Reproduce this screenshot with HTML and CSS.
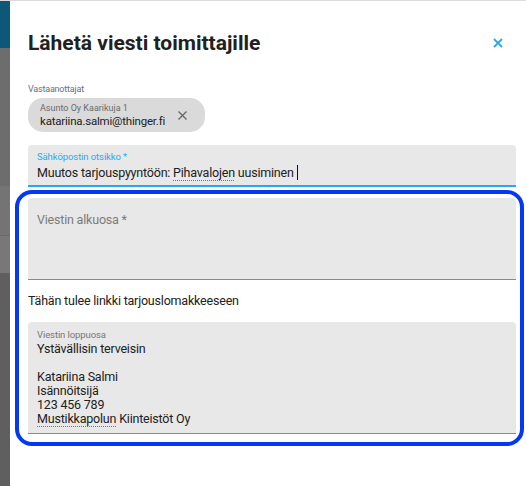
FILE: index.html
```html
<!DOCTYPE html>
<html lang="fi">
<head>
<meta charset="utf-8">
<title>Lähetä viesti toimittajille</title>
<link rel="stylesheet" href="styles.css">
</head>
<body>
<div class="page">
  <div class="backdrop">
    <div class="bd-head"></div>
    <div class="bd-a"></div>
    <div class="bd-b"></div>
    <div class="bd-c"></div>
    <div class="bd-d"></div>
  </div>
  <div class="dialog">
    <div class="dialog-head">
      <h1 class="title">Lähetä viesti toimittajille</h1>
      <button class="close" aria-label="Sulje">
        <svg width="10" height="10" viewBox="0 0 10 10"><path d="M1 1L9 9M9 1L1 9" stroke="#29a8f2" stroke-width="1.8" fill="none"/></svg>
      </button>
    </div>

    <div class="recipients">
      <div class="small-label">Vastaanottajat</div>
      <div class="chip">
        <div class="chip-text">
          <div class="chip-sub">Asunto Oy Kaarikuja 1</div>
          <div class="chip-main">katariina.salmi@thinger.fi</div>
        </div>
        <svg class="chip-x" width="9" height="9" viewBox="0 0 9 9"><path d="M0.5 0.5L8.5 8.5M8.5 0.5L0.5 8.5" stroke="#666" stroke-width="1.3" fill="none"/></svg>
      </div>
    </div>

    <div class="field field-focus subject">
      <div class="field-label focus-label">Sähköpostin otsikko *</div>
      <div class="field-value">Muutos tarjouspyyntöön: <span class="spell">Pihavalojen</span> uusiminen<span class="cursor"></span></div>
    </div>

    <div class="highlight">
      <div class="field intro">
        <div class="placeholder">Viestin alkuosa *</div>
      </div>
      <div class="link-note">Tähän tulee linkki tarjouslomakkeeseen</div>
      <div class="field outro">
        <div class="field-label">Viestin loppuosa</div>
        <div class="field-value multi">Ystävällisin terveisin<br><br>Katariina Salmi<br>Isännöitsijä<br>123 456 789<br><span class="spell">Mustikkapolun</span> Kiinteistöt Oy</div>
      </div>
    </div>
  </div>
</div>
</body>
</html>
```

FILE: styles.css
```css
* { box-sizing: border-box; }
html, body { margin: 0; padding: 0; background: #fff; }
body {
  font-family: Roboto, "Liberation Sans", Arial, sans-serif;
  color: #212121;
  overflow: hidden;
}
.page {
  display: flex;
  width: 526px;
  height: 486px;
  border-top: 1px solid #dcdcdf;
  overflow: hidden;
}
.backdrop {
  width: 10px;
  flex: none;
  display: flex;
  flex-direction: column;
  background: #5c5c5c;
}
.bd-head { height: 47px; background: #0d5878; }
.bd-a { height: 138px; background: #6d6d6d; }
.bd-b { height: 50px; background: #747474; border-bottom: 1px solid #6a6a6a; }
.bd-c { height: 37px; background: #787878; }
.bd-d { flex: 1; background: #5f5f5f; }

.dialog {
  flex: none;
  width: 516px;
  background: #fff;
  padding: 30px 0 0 18px;
}
.dialog-head {
  display: flex;
  align-items: center;
  justify-content: space-between;
  width: 488px;
  height: 24px;
}
.title {
  margin: 0;
  font-size: 21px;
  line-height: 24px;
  font-weight: 700;
  color: #212121;
}
.close {
  border: 0;
  background: none;
  padding: 0;
  margin-right: 13px;
  width: 10px;
  height: 10px;
  display: block;
}
.close svg { display: block; }

.recipients { margin-top: 28px; }
.small-label {
  font-size: 9px;
  line-height: 12px;
  color: #6f6f6f;
  letter-spacing: -0.2px;
}
.chip {
  margin-top: 3px;
  width: 177px;
  height: 34px;
  border-radius: 15px;
  background: #dadada;
  display: flex;
  align-items: center;
  justify-content: space-between;
  padding: 0 18px 0 12px;
}
.chip-sub {
  font-size: 9px;
  line-height: 11px;
  color: #6a6a6a;
  margin-top: 1px;
}
.chip-main {
  font-size: 11.5px;
  line-height: 15px;
  letter-spacing: -0.2px;
  color: #212121;
}
.chip-x { display: block; margin-top: 1px; }

.field {
  width: 488px;
  background: #e8e8e8;
  border-radius: 4px 4px 0 0;
  border-bottom: 1px solid #8a8a8a;
  padding: 0 9px;
}
.field-focus { border-bottom: 2px solid #29a8f2; }
.subject {
  margin-top: 13px;
  height: 42px;
  padding-top: 6px;
}
.field-label {
  font-size: 9.5px;
  line-height: 12px;
  letter-spacing: -0.1px;
  color: #777;
}
.focus-label { color: #29a8f2; }
.field-value {
  font-size: 12.5px;
  line-height: 16px;
  letter-spacing: -0.2px;
  color: #212121;
  margin-top: 2px;
}
.spell {
  background-image: repeating-linear-gradient(to right, #e8473f 0 1px, transparent 1px 2px);
  background-size: 100% 1px;
  background-position: 0 100%;
  background-repeat: no-repeat;
  padding-bottom: 1px;
}
.cursor {
  display: inline-block;
  width: 1px;
  height: 15px;
  background: #111;
  margin-left: 3px;
  vertical-align: -3px;
}

.highlight {
  margin: 3px 0 0 -13px;
  width: 509px;
  border: 4px solid #0438f5;
  border-radius: 17px;
  padding: 4px 0 8px 9px;
}
.intro {
  height: 82px;
  padding-top: 14px;
}
.placeholder {
  font-size: 12.5px;
  line-height: 16px;
  letter-spacing: -0.2px;
  color: #7b7b7b;
}
.link-note {
  font-size: 12.5px;
  line-height: 16px;
  letter-spacing: -0.2px;
  color: #212121;
  margin: 13px 0 0 0;
  height: 29px;
}
.outro {
  height: 112px;
  padding-top: 7px;
}
.multi {
  font-size: 12.5px;
  line-height: 14px;
  margin-top: 1px;
}
```
